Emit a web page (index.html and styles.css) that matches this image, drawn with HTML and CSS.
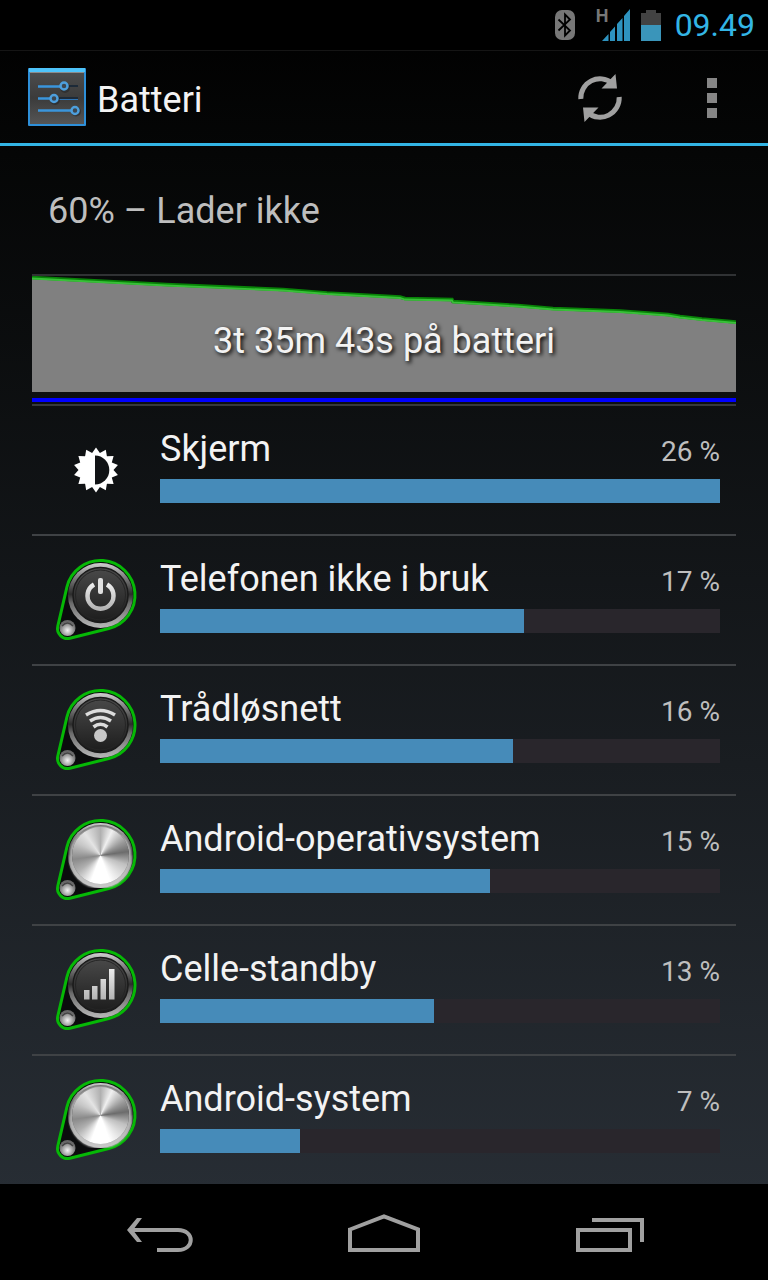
FILE: index.html
```html
<!DOCTYPE html>
<html lang="nb">
<head>
  <meta charset="UTF-8">
  <meta name="viewport" content="width=device-width, initial-scale=1.0">
  <title>Batteri</title>
  <link rel="stylesheet" href="styles.css">
</head>
<body>
  <!-- Shared icon parts -->
  <svg class="defs" width="0" height="0" aria-hidden="true">
    <defs>
      <linearGradient id="ring" x1="0" y1="0" x2="0" y2="1">
        <stop offset="0" stop-color="#d0d0d0"/>
        <stop offset="0.2" stop-color="#858585"/>
        <stop offset="0.48" stop-color="#2c2c2c"/>
        <stop offset="0.62" stop-color="#6c6c6c"/>
        <stop offset="1" stop-color="#b8b8b8"/>
      </linearGradient>
      <linearGradient id="face" x1="0" y1="0" x2="0" y2="1">
        <stop offset="0" stop-color="#4a4a4a"/>
        <stop offset="1" stop-color="#1c1c1c"/>
      </linearGradient>
      <linearGradient id="glyph" x1="0" y1="0" x2="0" y2="1">
        <stop offset="0" stop-color="#ececec"/>
        <stop offset="1" stop-color="#b4b4b4"/>
      </linearGradient>
      <radialGradient id="bead" cx="0.5" cy="0.65" r="0.55">
        <stop offset="0" stop-color="#f4f4f4"/>
        <stop offset="0.45" stop-color="#b4b4b4"/>
        <stop offset="1" stop-color="#666"/>
      </radialGradient>
      <linearGradient id="panel" x1="0" y1="0" x2="0" y2="1">
        <stop offset="0" stop-color="#4c4c4c"/>
        <stop offset="0.5" stop-color="#3b3b3b"/>
        <stop offset="1" stop-color="#555"/>
      </linearGradient>
      <symbol id="pin" viewBox="0 0 80 80" overflow="visible">
        <path d="M1.8 66.2 10.9 27.1A34.5 34.5 0 1 1 52.8 68.5L13.9 78.2A10 10 0 0 1 1.8 66.2Z" fill="#0b0c0d" stroke="#06b806" stroke-width="3"/>
        <circle cx="44.5" cy="35.5" r="32.5" fill="url(#ring)"/>
        <circle cx="11.5" cy="68" r="8" fill="url(#bead)"/>
        <path d="M6 66Q11.500 60 17 66" fill="none" stroke="#444" stroke-width="1.500"/>
      </symbol>
      <symbol id="dark-pin" viewBox="0 0 80 80" overflow="visible">
        <use href="#pin" width="80" height="80"/>
        <circle cx="44.5" cy="35" r="27.5" fill="url(#face)" stroke="#1a1a1a" stroke-width="1.5"/>
        <circle cx="44.5" cy="35" r="25" fill="none" stroke="#252525" stroke-width="1"/>
      </symbol>
    </defs>
  </svg>

  <div class="status-bar">
    <svg class="bluetooth" width="20" height="30" viewBox="0 0 20 30">
      <rect width="20" height="30" rx="7" fill="#777"/>
      <path d="M3.500 9.500 15 20.500 10 25.500V4.500L15 9.500 3.500 20.500" fill="none" stroke="#000" stroke-width="1.8"/>
    </svg>
    <span class="network">H</span>
    <svg class="signal" width="28" height="32" viewBox="0 0 28 32">
      <path d="M0 32 6.500 25V32ZM8 32V23L13 17.500V32ZM15 32V15L20.500 9V32ZM22 32V7L28 0V32Z" fill="#2e93bf"/>
    </svg>
    <svg class="battery" width="20" height="31" viewBox="0 0 20 31">
      <path d="M0 3H5V0H15V3H20V15H0Z" fill="#424242"/>
      <path d="M0 15H20V31H0Z" fill="#3a95ba"/>
    </svg>
    <time class="clock">09.49</time>
  </div>

  <header class="action-bar">
    <svg class="app-icon" width="58" height="58" viewBox="0 0 58 58">
      <rect width="58" height="58" rx="1" fill="#2e8fd8"/>
      <rect x="1" y="0" width="56" height="4" fill="#4ec4fa"/>
      <rect x="2" y="4" width="54" height="52" fill="url(#panel)"/>
      <path d="M2 4.500H56" stroke="#8b8b8b"/>
      <path d="M41 18H50M31 30H50" stroke="#1d2a38" stroke-width="2"/>
      <path d="M31 31.500H50" stroke="#2f74b4" stroke-width="1"/>
      <path d="M10 18.500H32M10 30.500H22M10 42.500H43" stroke="#3a95dc" stroke-width="2.500"/>
      <g fill="#3c4650" stroke="#222" stroke-opacity=".5" stroke-width="3">
        <circle cx="37" cy="20" r="3.500"/>
        <circle cx="27" cy="32" r="3.500"/>
        <circle cx="48" cy="43.500" r="3.500"/>
      </g>
      <g fill="#3c4650" stroke="#4d9fdd" stroke-width="2.500">
        <circle cx="36" cy="18" r="3.500"/>
        <circle cx="26" cy="30.500" r="3.500"/>
        <circle cx="47" cy="42.500" r="3.500"/>
      </g>
    </svg>
    <h1>Batteri</h1>
    <button class="action" type="button" aria-label="Oppdater">
      <svg width="48" height="52" viewBox="0 0 48 52">
        <g fill="none" stroke="#a0a0a0" stroke-width="5">
          <path d="M4.800 27A19.200 19.200 0 0 1 36 11"/>
          <path d="M43.200 25A19.200 19.200 0 0 1 12 41"/>
        </g>
        <path d="M39.500 2 41 16.500H25.500ZM8.500 50 7 35.500H22.500Z" fill="#a0a0a0"/>
      </svg>
    </button>
    <button class="action" type="button" aria-label="Flere alternativer">
      <svg width="10" height="40" viewBox="0 0 10 40">
        <path d="M0 0H10V10H0ZM0 15H10V25H0ZM0 30H10V40H0Z" fill="#868686"/>
      </svg>
    </button>
  </header>

  <main class="content">
    <p class="summary">60% – Lader ikke</p>

    <!-- Battery history -->
    <section class="history">
      <svg class="chart" viewBox="0 0 704 116" preserveAspectRatio="none">
        <path d="M0 2 134 9 251 14 295 17.500 368 21.500 373 23 420 24 421 26 486 30 521 33 588 35.500 636 39 648 41 670 43.500 704 46.500V116H0Z" fill="#808080"/>
        <g fill="none">
          <path d="M0 1.500 134 8.500 251 13.500 295 17 368 21 373 22.500 420 23.500 421 25.500 486 29.500 521 32.500 588 35 636 38.500 648 40.500 670 43 704 46" stroke="#088308" stroke-width="3.500"/>
          <path d="M0 2.500 134 9.500 251 14.500 295 18 368 22 373 23.500 420 24.500 421 26.500 486 30.500 521 33.500 588 36 636 39.500 648 41.500 670 44 704 47" stroke="#38c038" stroke-width="1.800"/>
        </g>
      </svg>
      <div class="awake"></div>
      <p class="uptime">3t 35m 43s på batteri</p>
    </section>

    <ul class="usage">
      <li class="item">
        <svg class="icon" width="80" height="80" viewBox="-40 -40 80 80">
          <path d="M0-22.500 3.900-17.100 9.800-20.300 10.900-13.700 17.600-14 15.800-7.600 21.900-5 17.500 0 21.900 5 15.800 7.600 17.600 14 10.900 13.700 9.800 20.300 3.900 17.100 0 22.500-3.900 17.100-9.800 20.300-10.900 13.700-17.600 14-15.800 7.600-21.900 5-17.500 0-21.900-5-15.800-7.600-17.600-14-10.900-13.700-9.800-20.300-3.900-17.100Z" fill="#fff"/>
          <path d="M-1-14.500A14.300 14.500 0 0 1-1 14.500Z" fill="#111315"/>
        </svg>
        <div class="details">
          <span class="name">Skjerm</span><span class="percent">26 %</span>
          <div class="bar"><div class="fill" style="width: 100%"></div></div>
        </div>
      </li>
      <li class="item">
        <svg class="icon" width="80" height="80" viewBox="0 0 80 80">
          <use href="#dark-pin" width="80" height="80"/>
          <path d="M38 24.500A13 13 0 1 0 51 24.500" fill="none" stroke="url(#glyph)" stroke-width="4.500"/>
          <rect x="42" y="18" width="5" height="16" rx="2" fill="#e0e0e0"/>
        </svg>
        <div class="details">
          <span class="name">Telefonen ikke i bruk</span><span class="percent">17 %</span>
          <div class="bar"><div class="fill" style="width: 65%"></div></div>
        </div>
      </li>
      <li class="item">
        <svg class="icon" width="80" height="80" viewBox="0 0 80 80">
          <use href="#dark-pin" width="80" height="80"/>
          <g fill="none" stroke="#dcdcdc" stroke-width="3.500">
            <path d="M30 25Q44.500 16 59 25"/>
            <path d="M34 31Q44.500 24 55 31"/>
            <path d="M37.500 37Q44.500 31.500 51.500 37"/>
          </g>
          <circle cx="44.500" cy="45.500" r="6.500" fill="#c8c8c8"/>
        </svg>
        <div class="details">
          <span class="name">Trådløsnett</span><span class="percent">16 %</span>
          <div class="bar"><div class="fill" style="width: 63%"></div></div>
        </div>
      </li>
      <li class="item">
        <svg class="icon" width="80" height="80" viewBox="0 0 80 80">
          <use href="#pin" width="80" height="80"/>
          <foreignObject x="12" y="3" width="65" height="65"><div class="metal"></div></foreignObject>
        </svg>
        <div class="details">
          <span class="name">Android-operativsystem</span><span class="percent">15 %</span>
          <div class="bar"><div class="fill" style="width: 59%"></div></div>
        </div>
      </li>
      <li class="item">
        <svg class="icon" width="80" height="80" viewBox="0 0 80 80">
          <use href="#dark-pin" width="80" height="80"/>
          <path d="M28 40H33.500V49.500H28ZM36 36H41.500V49.500H36ZM44.500 29H50V49.500H44.500ZM53 19H58.500V49.500H53Z" fill="url(#glyph)"/>
        </svg>
        <div class="details">
          <span class="name">Celle-standby</span><span class="percent">13 %</span>
          <div class="bar"><div class="fill" style="width: 49%"></div></div>
        </div>
      </li>
      <li class="item">
        <svg class="icon" width="80" height="80" viewBox="0 0 80 80">
          <use href="#pin" width="80" height="80"/>
          <foreignObject x="12" y="3" width="65" height="65"><div class="metal"></div></foreignObject>
        </svg>
        <div class="details">
          <span class="name">Android-system</span><span class="percent">7 %</span>
          <div class="bar"><div class="fill" style="width: 25%"></div></div>
        </div>
      </li>
    </ul>
  </main>

  <nav class="nav-bar">
    <button type="button" aria-label="Tilbake">
      <svg width="72" height="40" viewBox="0 0 72 40">
        <path d="M5 18H54C71 18 71 38 54 38H33" fill="none" stroke="#a0a0a0" stroke-width="4"/>
        <path d="M13 6H18L9 18 18 30H13L3 18Z" fill="#a0a0a0"/>
      </svg>
    </button>
    <button type="button" aria-label="Hjem">
      <svg width="72" height="40" viewBox="0 0 72 40">
        <path d="M2 17.500 36 4.500 70 17.500V38H2Z" fill="none" stroke="#a0a0a0" stroke-width="4"/>
      </svg>
    </button>
    <button type="button" aria-label="Nylige apper">
      <svg width="72" height="40" viewBox="0 0 72 40">
        <path d="M6 18H58V38H6ZM20 8H70V30" fill="none" stroke="#a0a0a0" stroke-width="4"/>
      </svg>
    </button>
  </nav>
</body>
</html>
```
FILE: styles.css
```css
* {
  box-sizing: border-box;
}

body {
  display: flex;
  flex-direction: column;
  min-height: 100vh;
  margin: 0;
  background: linear-gradient(#000000, #050606 12%, #272d34 93%);
  color: #f3f3f3;
  font-family: Roboto, sans-serif;
  font-size: 36px;
}

h1, p, ul {
  margin: 0;
  padding: 0;
  font-size: 36px;
  font-weight: normal;
}

svg {
  display: block;
  flex-shrink: 0;
}

button {
  display: flex;
  align-items: center;
  justify-content: center;
  padding: 0;
  border: none;
  background: none;
  cursor: pointer;
}

.defs {
  position: absolute;
}

/* Status bar */
.status-bar {
  display: flex;
  align-items: center;
  justify-content: flex-end;
  height: 51px;
  padding-right: 13px;
  border-bottom: 1px solid #151515;
  background: #000;
}

.network {
  align-self: flex-start;
  width: 14px;
  margin-left: 21px;
  padding-top: 6px;
  color: #777;
  font-size: 18px;
  font-weight: bold;
  line-height: 20px;
}

.signal {
  margin: 0 11px 0 -8px;
}

.bluetooth {
  margin-right: 0;
}

.clock {
  margin-left: 14px;
  color: #33b5e5;
  font-size: 32px;
}

/* Action bar */
.action-bar {
  display: flex;
  align-items: center;
  height: 95px;
  padding-left: 28px;
  border-bottom: 3px solid #33b5e5;
}

.action-bar h1 {
  flex: 1;
  margin-left: 11px;
  padding-top: 6px;
}

.action {
  width: 112px;
  height: 92px;
  padding-top: 2px;
}

/* Content */
.content {
  flex: 1;
  padding: 0 32px;
}

.summary {
  padding: 2px 16px 0;
  line-height: 126px;
  color: #bebebe;
}

.history {
  position: relative;
  height: 132px;
  border-top: 2px solid #303234;
  border-bottom: 2px solid #37393b;
}

.chart {
  width: 100%;
  height: 116px;
}

.awake {
  height: 4px;
  margin-top: 6px;
  background: #0000ff;
}

.uptime {
  position: absolute;
  inset: 0;
  line-height: 130px;
  text-align: center;
  text-shadow: 2px 2px 4px #000;
}

.usage {
  list-style: none;
}

.item {
  display: flex;
  align-items: center;
  gap: 24px;
  height: 130px;
  padding: 0 16px 0 24px;
  border-bottom: 2px solid #3f4245;
}

.item:last-child {
  height: 128px;
  border-bottom: none;
}

.icon {
  overflow: visible;
}

.details {
  display: grid;
  flex: 1;
  grid-template-columns: 1fr auto;
  align-items: baseline;
  row-gap: 6px;
  padding-bottom: 12px;
}

.name {
  line-height: 48px;
}

.percent {
  color: #bebebe;
  font-size: 28px;
}

.bar {
  grid-column: 1 / 3;
  height: 24px;
  background: #29262c;
}

.fill {
  height: 100%;
  background: #468bb9;
}

/* Brushed metal knob */
.metal {
  width: 57px;
  height: 57px;
  margin: 4px;
  border-radius: 50%;
  background: conic-gradient(#b0b0b0, #f0f0f0 25deg, #999999 60deg, #6c6c6c 82deg, #c0c0c0 110deg, #ffffff 160deg, #ffffff 200deg, #b0b0b0 235deg, #8a8a8a 262deg, #c8c8c8 300deg, #e4e4e4 325deg, #b0b0b0);
  box-shadow: 0 2px 2px 3px rgba(210, 210, 210, 0.7), 0 -1px 1px 1px #555;
}

/* Navigation bar */
.nav-bar {
  display: flex;
  height: 96px;
  padding: 0 48px;
  background: #000;
}

.nav-bar button {
  flex: 1;
}
```
